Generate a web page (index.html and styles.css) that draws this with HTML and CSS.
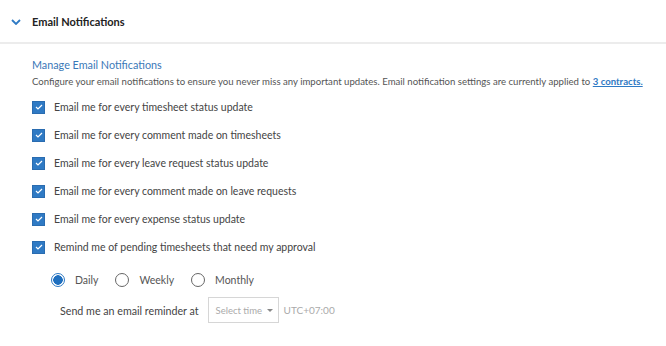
FILE: index.html
```html
<!DOCTYPE html>
<html>
<head>
<meta charset="utf-8">
<link rel="stylesheet" href="styles.css">
</head>
<body>
<div class="panel">
  <div class="header">
    <svg class="chev" width="10" height="6" viewBox="0 0 10 6"><path d="M1 1 L5 5 L9 1" fill="none" stroke="#2f7ac4" stroke-width="1.8"/></svg>
    <span class="title">Email Notifications</span>
  </div>
  <div class="body">
    <div class="subtitle">Manage Email Notifications</div>
    <div class="desc">Configure your email notifications to ensure you never miss any important updates. Email notification settings are currently applied to <a class="link">3 contracts.</a></div>
    <div class="list">
      <label class="row"><span class="cb"><svg width="8" height="6" viewBox="0 0 8 6"><path d="M1 3 L3 5 L7 1" fill="none" stroke="#fff" stroke-width="1.2"/></svg></span>Email me for every timesheet status update</label>
      <label class="row"><span class="cb"><svg width="8" height="6" viewBox="0 0 8 6"><path d="M1 3 L3 5 L7 1" fill="none" stroke="#fff" stroke-width="1.2"/></svg></span>Email me for every comment made on timesheets</label>
      <label class="row"><span class="cb"><svg width="8" height="6" viewBox="0 0 8 6"><path d="M1 3 L3 5 L7 1" fill="none" stroke="#fff" stroke-width="1.2"/></svg></span>Email me for every leave request status update</label>
      <label class="row"><span class="cb"><svg width="8" height="6" viewBox="0 0 8 6"><path d="M1 3 L3 5 L7 1" fill="none" stroke="#fff" stroke-width="1.2"/></svg></span>Email me for every comment made on leave requests</label>
      <label class="row"><span class="cb"><svg width="8" height="6" viewBox="0 0 8 6"><path d="M1 3 L3 5 L7 1" fill="none" stroke="#fff" stroke-width="1.2"/></svg></span>Email me for every expense status update</label>
      <label class="row"><span class="cb"><svg width="8" height="6" viewBox="0 0 8 6"><path d="M1 3 L3 5 L7 1" fill="none" stroke="#fff" stroke-width="1.2"/></svg></span>Remind me of pending timesheets that need my approval</label>
    </div>
    <div class="radios">
      <label class="radio"><span class="rb on"></span>Daily</label>
      <label class="radio"><span class="rb"></span>Weekly</label>
      <label class="radio"><span class="rb"></span>Monthly</label>
    </div>
    <div class="reminder">
      <span>Send me an email reminder at</span>
      <span class="select">Select time <span class="caret"></span></span>
      <span class="tz">UTC+07:00</span>
    </div>
  </div>
</div>
</body>
</html>
```
FILE: styles.css
```css
* { box-sizing: border-box; }
html, body { margin: 0; padding: 0; background: #fff; }
body { font-family: "Lato", "Open Sans", sans-serif; color: #333; }
.panel { width: 666px; }
.header {
  height: 44px;
  display: flex;
  align-items: center;
  padding-left: 11px;
  border-bottom: 2px solid #ececec;
}
.chev { margin-right: 11px; margin-top: 1px; }
.title { font-size: 11px; font-weight: 700; color: #222; margin-top: 1px; }
.body { padding: 13px 0 0 32px; }
.subtitle { font-size: 10.8px; color: #3a78b8; line-height: 16px; }
.desc { font-size: 9.6px; color: #555; line-height: 14px; margin-top: 2px; white-space: nowrap; }
.link { color: #2f7ac4; text-decoration: underline; font-weight: 700; }
.list { margin-top: 11px; display: flex; flex-direction: column; gap: 14px; }
.row { display: flex; align-items: center; height: 14px; font-size: 10.5px; color: #444; }
.cb {
  width: 13px; height: 13px; background: #2f7ac4; border: 1px solid #2a6cb0;
  display: inline-flex; align-items: center; justify-content: center; margin-right: 9px;
}
.radios { display: flex; align-items: center; margin: 18px 0 0 19px; height: 16px; }
.radio { display: flex; align-items: center; font-size: 10.5px; color: #555; margin-right: 17px; }
.rb {
  width: 14px; height: 14px; border-radius: 50%; border: 1px solid #666; margin-right: 10px; background: #fff;
}
.rb.on { border: 1px solid #2f7ac4; background: radial-gradient(circle, #1f6fbf 0 4.5px, #fff 5px); }
.reminder { display: flex; align-items: center; margin: 9px 0 0 28px; font-size: 10.7px; color: #444; }
.select {
  margin-left: 9px; width: 71px; height: 26px; border: 1px solid #d6d6d6;
  display: inline-flex; align-items: center; padding-left: 7px; font-size: 9.5px; color: #aaa;
}
.caret { width: 0; height: 0; border-left: 3px solid transparent; border-right: 3px solid transparent; border-top: 3px solid #888; margin-left: 5px; }
.tz { margin-left: 5px; font-size: 10px; color: #aaa; }
```
